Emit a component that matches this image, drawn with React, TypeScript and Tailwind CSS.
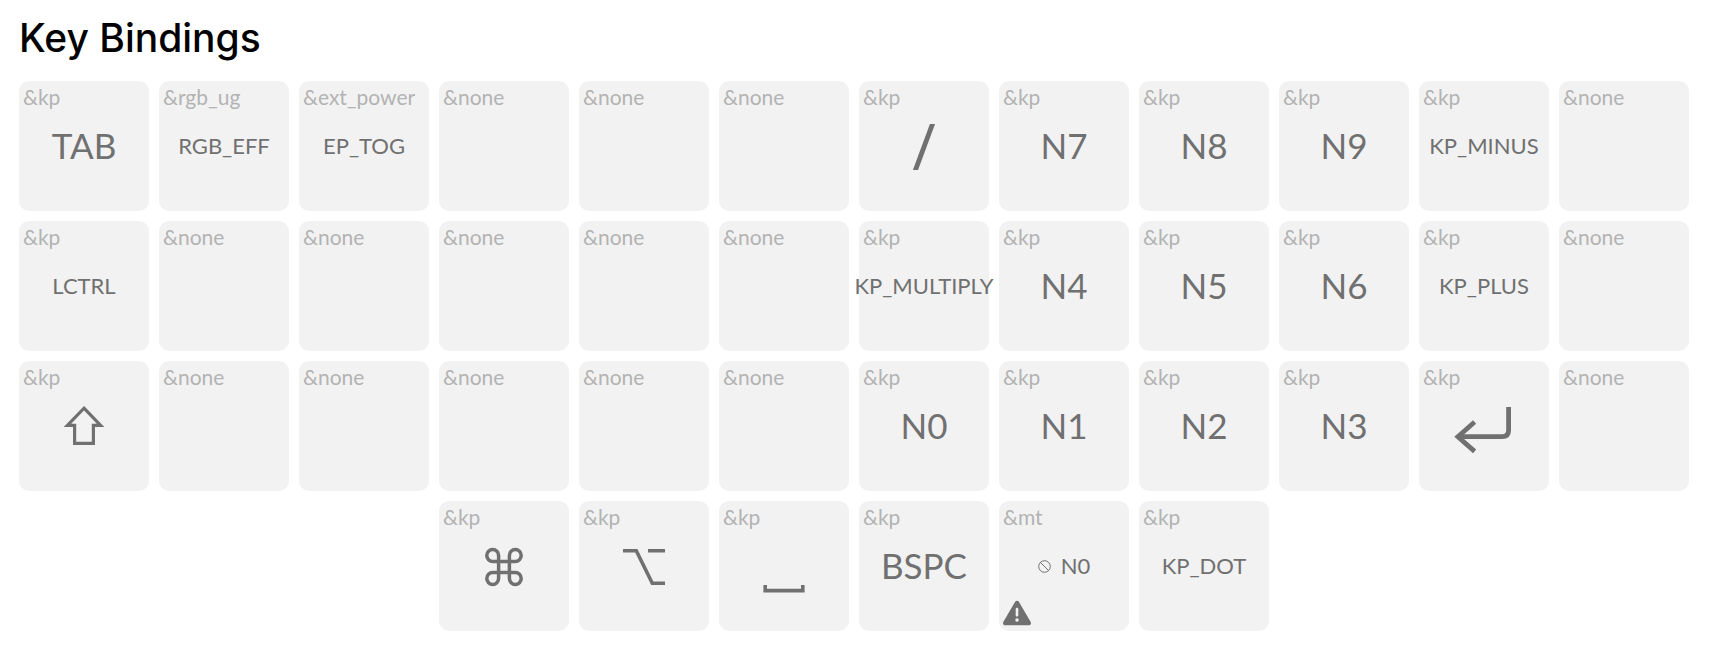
import type { ReactNode } from "react";
import { FaTriangleExclamation } from "react-icons/fa6";

type Size = "xl" | "lg" | "sm";

interface KeyBinding {
  behavior: string;
  legend?: string;
  size?: Size;
  icon?: ReactNode;
  name?: string;
  warning?: boolean;
}

const sizeClass: Record<Size, string> = {
  xl: "text-[64px] font-['Open_Sans',sans-serif]",
  lg: "pb-0.5 text-[35px]",
  sm: "text-[22px]",
};

function Glyph({ children, width }: { children: ReactNode; width: number }) {
  return (
    <svg
      viewBox="33 33 64 64"
      className="size-16 shrink-0"
      fill="none"
      stroke="currentColor"
      strokeWidth={width}
      strokeMiterlimit={10}
      aria-hidden="true"
    >
      {children}
    </svg>
  );
}

const shiftIcon = (
  <Glyph width={3.2}>
    <path d="M65 47.2 L81.6 64.4 H74.4 V82.4 H55.6 V64.4 H48.4 Z" />
  </Glyph>
);

const returnIcon = (
  <Glyph width={4.8}>
    <path d="M89.6 46 V69.2 Q89.6 75.7 83.1 75.7 H39" />
    <path d="M55.6 61 L38.9 75.7 L55.6 90.4" />
  </Glyph>
);

const commandIcon = (
  <Glyph width={3.5}>
    <path d="M59.6 60.4 V54.5 a5.9 5.9 0 1 0 -5.9 5.9 H76.3 a5.9 5.9 0 1 0 -5.9 -5.9 V77.5 a5.9 5.9 0 1 0 5.9 -5.9 H53.7 a5.9 5.9 0 1 0 5.9 5.9 Z" />
  </Glyph>
);

const optionIcon = (
  <Glyph width={3.6}>
    <path d="M44 49.8 H57.3 L73.3 82.3 H86 M69 49.8 H86" />
  </Glyph>
);

const spaceIcon = (
  <Glyph width={3.6}>
    <path d="M46.2 84 V89.6 H83.8 V84" />
  </Glyph>
);

const banIcon = (
  <svg viewBox="0 0 13 13" className="size-[13px] shrink-0" fill="none" stroke="currentColor" aria-hidden="true">
    <circle cx="6.5" cy="6.5" r="5.8" />
    <path d="M2.4 2.4 L10.6 10.6" />
  </svg>
);

const none: KeyBinding = { behavior: "&none" };
const kp = (legend: string, size: Size = "lg"): KeyBinding => ({ behavior: "&kp", legend, size });
const kpIcon = (name: string, icon: ReactNode): KeyBinding => ({ behavior: "&kp", name, icon });

const mainKeys: KeyBinding[] = [
  kp("TAB"),
  { behavior: "&rgb_ug", legend: "RGB_EFF", size: "sm" },
  { behavior: "&ext_power", legend: "EP_TOG", size: "sm" },
  none,
  none,
  none,
  kp("/", "xl"),
  kp("N7"),
  kp("N8"),
  kp("N9"),
  kp("KP_MINUS", "sm"),
  none,

  kp("LCTRL", "sm"),
  none,
  none,
  none,
  none,
  none,
  kp("KP_MULTIPLY", "sm"),
  kp("N4"),
  kp("N5"),
  kp("N6"),
  kp("KP_PLUS", "sm"),
  none,

  kpIcon("Shift", shiftIcon),
  none,
  none,
  none,
  none,
  none,
  kp("N0"),
  kp("N1"),
  kp("N2"),
  kp("N3"),
  kpIcon("Return", returnIcon),
  none,
];

const thumbKeys: KeyBinding[] = [
  kpIcon("Command", commandIcon),
  kpIcon("Option", optionIcon),
  kpIcon("Space", spaceIcon),
  kp("BSPC"),
  { behavior: "&mt", legend: "N0", size: "sm", icon: banIcon, warning: true },
  kp("KP_DOT", "sm"),
];

function Key({ binding, first = false }: { binding: KeyBinding; first?: boolean }) {
  const { behavior, legend, size = "sm", icon, name, warning } = binding;
  return (
    <button
      type="button"
      aria-label={name ? `${behavior} ${name}` : undefined}
      className={`relative flex aspect-square min-w-0 items-center justify-center rounded-[10px] bg-[#f2f2f2] text-[#707070] ${first ? "col-start-4" : ""}`}
    >
      <span className="absolute top-0.5 left-1 text-[21px] leading-7 text-[#b3b3b3]">{behavior}</span>
      <span className={`flex items-center gap-2.5 leading-none whitespace-nowrap ${sizeClass[size]}`}>
        {icon}
        {legend}
      </span>
      {warning && <FaTriangleExclamation className="absolute bottom-1 left-1 size-7" aria-hidden="true" />}
    </button>
  );
}

export default function App() {
  return (
    <main className="bg-white pt-3 pr-[39px] pb-8 pl-[19px] font-['Lato',sans-serif]">
      <h1 className="text-[39px] leading-[52px] font-medium text-black font-['Inter',sans-serif]">Key Bindings</h1>
      <div className="mt-[17px] grid grid-cols-12 gap-2.5">
        {mainKeys.map((binding, i) => (
          <Key key={i} binding={binding} />
        ))}
        {thumbKeys.map((binding, i) => (
          <Key key={`thumb-${i}`} binding={binding} first={i === 0} />
        ))}
      </div>
    </main>
  );
}
